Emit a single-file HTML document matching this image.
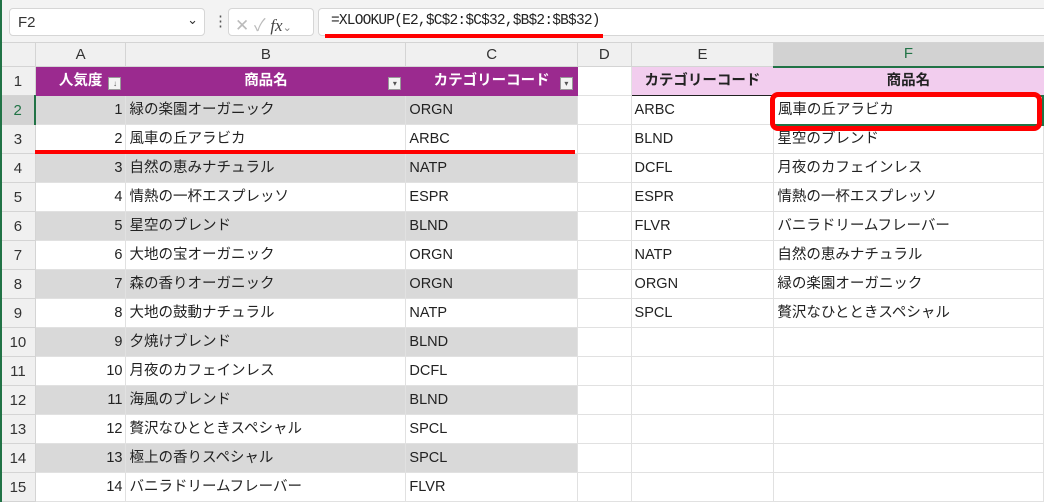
<!DOCTYPE html>
<html><head><meta charset="utf-8"><style>
*{box-sizing:border-box;margin:0;padding:0}
body{width:1044px;height:502px;overflow:hidden;background:#fff;font-family:"Liberation Sans","Noto Sans CJK JP",sans-serif;position:relative}
.abs{position:absolute}
table{position:absolute;left:0;top:42px;border-collapse:collapse;table-layout:fixed}
td{height:29px;border:1px solid #e1e1e1;font-size:14.5px;color:#222;padding:0 3px;white-space:nowrap;overflow:hidden;line-height:27px;vertical-align:middle}
td span.t{display:inline-block;line-height:27px;vertical-align:middle}
tr.h td{height:24px;line-height:22px;background:#f0f0f0;border-color:#d4d4d4;text-align:center;color:#333;font-size:15px}
td.rh{background:#f0f0f0;border-color:#d4d4d4;text-align:center;color:#333;font-size:15px}
td.r{text-align:right}
.g{background:#d9d9d9}
.p{background:#9b2a8f;color:#fff;font-weight:bold;text-align:center;border-color:#9b2a8f}
.k{background:#f2cdee;font-weight:bold;text-align:center;color:#222;border-color:#f2cdee}
.dd{display:inline-block;width:13px;height:13px;border:1px solid #999;background:#f3f3f3;position:absolute;right:4px;top:10px;font-size:8px;line-height:11px;color:#555;text-align:center;font-weight:normal}
</style></head><body>
<div class="abs" style="left:0;top:0;width:1044px;height:42px;background:#f3f3f3"></div>
<div class="abs" style="left:0;top:0;width:2px;height:502px;background:#217346;z-index:5"></div>
<div class="abs" style="left:9px;top:8px;width:196px;height:28px;background:#fff;border:1px solid #d6d6d6;border-radius:4px;font-size:15px;padding:5px 0 0 8px;color:#333">F2<span style="position:absolute;right:6px;top:3px;font-size:13px">⌄</span></div>
<div class="abs" style="left:213px;top:12px;font-size:15px;color:#555">⋮</div>
<div class="abs" style="left:228px;top:8px;width:86px;height:28px;background:#fff;border:1px solid #d6d6d6;border-radius:4px;color:#bbb;font-size:17px;padding:2px 0 0 6px">✕ ✓ <i style="color:#444;font-family:'Liberation Serif',serif;font-size:17px">fx</i><span style="font-size:11px;color:#888">⌄</span></div>
<div class="abs" style="left:318px;top:8px;width:730px;height:28px;background:#fff;border:1px solid #d6d6d6;border-radius:4px;font-family:'Liberation Mono',monospace;font-size:14.5px;padding:4px 0 0 12px;color:#222;letter-spacing:-0.8px">=XLOOKUP(E2,$C$2:$C$32,$B$2:$B$32)</div>
<div class="abs" style="left:325px;top:34px;width:278px;height:4px;background:#f00;z-index:4"></div>
<table>
<colgroup><col style="width:35px"><col style="width:91px"><col style="width:281px"><col style="width:172px"><col style="width:54px"><col style="width:143px"><col style="width:270px"></colgroup>
<tr class="h"><td style="background:#f0f0f0"></td><td>A</td><td>B</td><td>C</td><td>D</td><td>E</td><td style="background:#d2d2d2;color:#217346;border-bottom:2px solid #217346">F</td></tr>
<tr><td class="rh">1</td><td class="p" style="position:relative">人気度<span class="dd">↓</span></td><td class="p" style="position:relative">商品名<span class="dd">▾</span></td><td class="p" style="position:relative">カテゴリーコード<span class="dd">▾</span></td><td></td><td class="k" style="border-bottom:1px solid #222">カテゴリーコード</td><td class="k" style="border-bottom:1px solid #222">商品名</td></tr>
<tr><td class="rh" style="background:#d2d2d2;color:#217346;border-right:2px solid #217346">2</td><td class="g r">1</td><td class="g">緑の楽園オーガニック</td><td class="g">ORGN</td><td></td><td>ARBC</td><td style="border:2px solid #217346">風車の丘アラビカ</td></tr>
<tr><td class="rh">3</td><td class="r">2</td><td>風車の丘アラビカ</td><td>ARBC</td><td></td><td>BLND</td><td>星空のブレンド</td></tr>
<tr><td class="rh">4</td><td class="g r">3</td><td class="g">自然の恵みナチュラル</td><td class="g">NATP</td><td></td><td>DCFL</td><td>月夜のカフェインレス</td></tr>
<tr><td class="rh">5</td><td class="r">4</td><td>情熱の一杯エスプレッソ</td><td>ESPR</td><td></td><td>ESPR</td><td>情熱の一杯エスプレッソ</td></tr>
<tr><td class="rh">6</td><td class="g r">5</td><td class="g">星空のブレンド</td><td class="g">BLND</td><td></td><td>FLVR</td><td>バニラドリームフレーバー</td></tr>
<tr><td class="rh">7</td><td class="r">6</td><td>大地の宝オーガニック</td><td>ORGN</td><td></td><td>NATP</td><td>自然の恵みナチュラル</td></tr>
<tr><td class="rh">8</td><td class="g r">7</td><td class="g">森の香りオーガニック</td><td class="g">ORGN</td><td></td><td>ORGN</td><td>緑の楽園オーガニック</td></tr>
<tr><td class="rh">9</td><td class="r">8</td><td>大地の鼓動ナチュラル</td><td>NATP</td><td></td><td>SPCL</td><td>贅沢なひとときスペシャル</td></tr>
<tr><td class="rh">10</td><td class="g r">9</td><td class="g">夕焼けブレンド</td><td class="g">BLND</td><td></td><td></td><td></td></tr>
<tr><td class="rh">11</td><td class="r">10</td><td>月夜のカフェインレス</td><td>DCFL</td><td></td><td></td><td></td></tr>
<tr><td class="rh">12</td><td class="g r">11</td><td class="g">海風のブレンド</td><td class="g">BLND</td><td></td><td></td><td></td></tr>
<tr><td class="rh">13</td><td class="r">12</td><td>贅沢なひとときスペシャル</td><td>SPCL</td><td></td><td></td><td></td></tr>
<tr><td class="rh">14</td><td class="g r">13</td><td class="g">極上の香りスペシャル</td><td class="g">SPCL</td><td></td><td></td><td></td></tr>
<tr><td class="rh">15</td><td class="r">14</td><td>バニラドリームフレーバー</td><td>FLVR</td><td></td><td></td><td></td></tr>
</table>
<div class="abs" style="left:35px;top:150px;width:540px;height:4px;background:#f00"></div>
<div class="abs" style="left:770px;top:92px;width:272px;height:39px;border:5px solid #f00;border-radius:8px"></div>
</body></html>
